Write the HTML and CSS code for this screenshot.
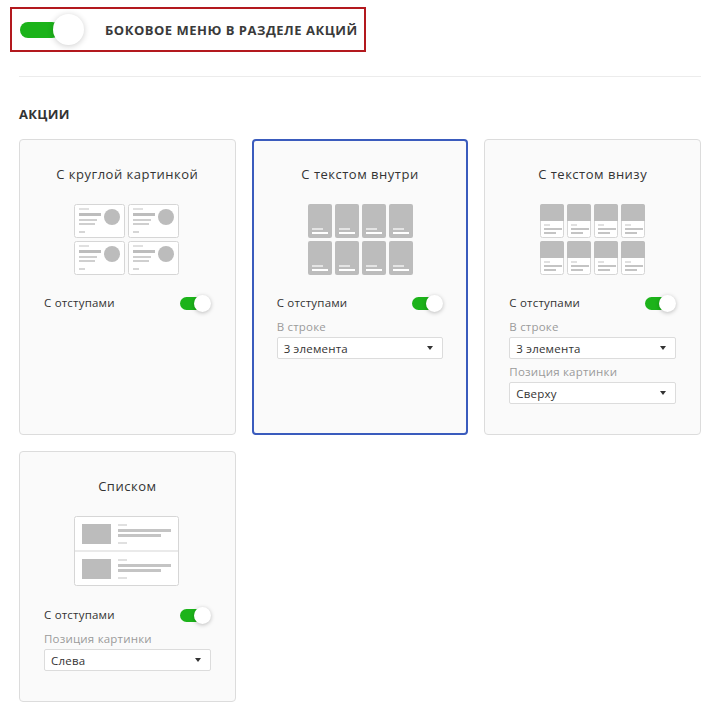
FILE: index.html
```html
<!DOCTYPE html>
<html lang="ru">
<head>
    <meta charset="UTF-8">
    <meta name="viewport" content="width=device-width, initial-scale=1.0">
    <title>Настройки акций</title>
    <link rel="stylesheet" href="styles.css">
</head>
<body>

    <div class="settings">
        <!-- Side menu option -->
        <div class="side-option">
            <span class="switch switch-big on"><span class="knob"></span></span>
            <span class="side-option-text">Боковое меню в разделе акций</span>
        </div>

        <hr class="divider">

        <h3 class="section-title">Акции</h3>

        <div class="views">
            <!-- Round picture -->
            <div class="view">
                <div class="view-title">С круглой картинкой</div>
                <svg class="thumb" width="106" height="71" viewBox="0 0 106 71">
                    <defs>
                        <g id="tile-round">
                            <rect x="0.5" y="0.5" width="50" height="33" rx="2" fill="#fff" stroke="#d6d6d6"/>
                            <rect x="5" y="4" width="10" height="2" fill="#e0e0e0"/>
                            <rect x="5" y="9" width="22" height="3" fill="#bdbdbd"/>
                            <rect x="5" y="15" width="18" height="2" fill="#cfcfcf"/>
                            <rect x="5" y="19" width="16" height="2" fill="#cfcfcf"/>
                            <rect x="5" y="27" width="6" height="2" fill="#d6d6d6"/>
                            <circle cx="38" cy="13" r="8" fill="#bcbcbc"/>
                        </g>
                    </defs>
                    <use href="#tile-round" x="0" y="0"/>
                    <use href="#tile-round" x="54" y="0"/>
                    <use href="#tile-round" x="0" y="37"/>
                    <use href="#tile-round" x="54" y="37"/>
                </svg>
                <div class="option-row">
                    <span>С отступами</span>
                    <span class="switch on"><span class="knob"></span></span>
                </div>
            </div>

            <!-- Text inside -->
            <div class="view active">
                <div class="view-title">С текстом внутри</div>
                <svg class="thumb" width="106" height="71" viewBox="0 0 106 71">
                    <defs>
                        <g id="tile-inside">
                            <rect x="0" y="0" width="24" height="34" rx="2" fill="#bcbcbc"/>
                            <rect x="4" y="24" width="11" height="2" fill="#e4e4e4"/>
                            <rect x="4" y="28" width="16" height="2" fill="#fff"/>
                        </g>
                    </defs>
                    <use href="#tile-inside" x="1" y="0"/>
                    <use href="#tile-inside" x="28" y="0"/>
                    <use href="#tile-inside" x="55" y="0"/>
                    <use href="#tile-inside" x="82" y="0"/>
                    <use href="#tile-inside" x="1" y="37"/>
                    <use href="#tile-inside" x="28" y="37"/>
                    <use href="#tile-inside" x="55" y="37"/>
                    <use href="#tile-inside" x="82" y="37"/>
                </svg>
                <div class="option-row">
                    <span>С отступами</span>
                    <span class="switch on"><span class="knob"></span></span>
                </div>
                <div class="field-label">В строке</div>
                <div class="select">3 элемента<span class="arrow"></span></div>
            </div>

            <!-- Text below -->
            <div class="view">
                <div class="view-title">С текстом внизу</div>
                <svg class="thumb" width="106" height="71" viewBox="0 0 106 71">
                    <defs>
                        <g id="tile-below">
                            <rect x="0.5" y="0.5" width="23" height="33" rx="2" fill="#fff" stroke="#d6d6d6"/>
                            <path d="M0 2 a2 2 0 0 1 2 -2 h20 a2 2 0 0 1 2 2 v15 h-24 z" fill="#bcbcbc"/>
                            <rect x="4" y="20" width="6" height="2" fill="#e0e0e0"/>
                            <rect x="4" y="24" width="18" height="2" fill="#c4c4c4"/>
                            <rect x="4" y="28" width="12" height="2" fill="#c4c4c4"/>
                        </g>
                    </defs>
                    <use href="#tile-below" x="0" y="0"/>
                    <use href="#tile-below" x="27" y="0"/>
                    <use href="#tile-below" x="54" y="0"/>
                    <use href="#tile-below" x="81" y="0"/>
                    <use href="#tile-below" x="0" y="37"/>
                    <use href="#tile-below" x="27" y="37"/>
                    <use href="#tile-below" x="54" y="37"/>
                    <use href="#tile-below" x="81" y="37"/>
                </svg>
                <div class="option-row">
                    <span>С отступами</span>
                    <span class="switch on"><span class="knob"></span></span>
                </div>
                <div class="field-label">В строке</div>
                <div class="select">3 элемента<span class="arrow"></span></div>
                <div class="field-label">Позиция картинки</div>
                <div class="select">Сверху<span class="arrow"></span></div>
            </div>

            <!-- List -->
            <div class="view">
                <div class="view-title">Списком</div>
                <svg class="thumb" width="106" height="71" viewBox="0 0 106 71">
                    <defs>
                        <g id="list-row">
                            <rect x="8" y="8" width="29" height="20" fill="#bcbcbc"/>
                            <rect x="44" y="8" width="9" height="2" fill="#e0e0e0"/>
                            <rect x="44" y="13" width="53" height="3" fill="#c4c4c4"/>
                            <rect x="44" y="18" width="43" height="3" fill="#c4c4c4"/>
                            <rect x="44" y="26" width="9" height="2" fill="#e0e0e0"/>
                        </g>
                    </defs>
                    <rect x="0.5" y="0.5" width="104" height="69" rx="2" fill="#fff" stroke="#d6d6d6"/>
                    <rect x="0" y="34.5" width="105" height="1" fill="#d6d6d6"/>
                    <use href="#list-row" x="0" y="0"/>
                    <use href="#list-row" x="0" y="35"/>
                </svg>
                <div class="option-row">
                    <span>С отступами</span>
                    <span class="switch on"><span class="knob"></span></span>
                </div>
                <div class="field-label">Позиция картинки</div>
                <div class="select">Слева<span class="arrow"></span></div>
            </div>
        </div>
    </div>

</body>
</html>
```

FILE: styles.css
```css
/* Page */
body {
    margin: 0;
    background: #fff;
    font-family: "Open Sans", Arial, sans-serif;
    color: #333;
}

.settings {
    width: 682px;
    padding: 7px 0 0 19px;
}

/* Side menu toggle block */
.side-option {
    display: flex;
    align-items: center;
    margin-left: -9px;
    padding: 0 8px;
    height: 41px;
    width: 336px;
    border: 2px solid #b3191e;
}

.side-option-text {
    margin-left: 45px;
    font-size: 13px;
    font-weight: 700;
    letter-spacing: 0.5px;
    text-transform: uppercase;
    white-space: nowrap;
    color: #3a3a3a;
}

.divider {
    border: none;
    border-top: 1px solid #ececec;
    margin: 24px 0 0 0;
}

.section-title {
    margin: 29px 0 0 0;
    font-size: 13px;
    line-height: 16px;
    font-weight: 700;
    letter-spacing: 0.3px;
    text-transform: uppercase;
}

/* Toggle switch */
.switch {
    position: relative;
    display: inline-block;
    flex-shrink: 0;
    width: 25px;
    height: 13px;
    border-radius: 7px;
    background: #ccc;
}

.switch.on {
    background: #1cb31a;
}

.switch .knob {
    position: absolute;
    top: -2px;
    right: -6px;
    width: 17px;
    height: 17px;
    border-radius: 50%;
    background: #fff;
    box-shadow: 0 1px 4px rgba(0, 0, 0, 0.25);
}

.switch-big {
    width: 40px;
    height: 16px;
    border-radius: 8px;
}

.switch-big .knob {
    top: -8px;
    right: -24px;
    width: 31px;
    height: 31px;
    box-shadow: 0 1px 6px rgba(0, 0, 0, 0.2);
}

/* View cards */
.views {
    display: grid;
    grid-template-columns: repeat(3, 1fr);
    gap: 16px;
    margin-top: 17px;
}

.view {
    display: flex;
    flex-direction: column;
    padding: 25px 24px 30px 24px;
    background: #fafafa;
    border: 1px solid #dcdcdc;
    border-radius: 4px;
}

.view.active {
    padding: 24px 23px 29px 23px;
    border: 2px solid #3a5bbd;
}

.view-title {
    text-align: center;
    font-size: 13px;
    line-height: 18px;
    letter-spacing: 0.5px;
}

.thumb {
    display: block;
    margin: 21px auto 0 auto;
}

.option-row {
    display: flex;
    justify-content: space-between;
    align-items: center;
    margin-top: 20px;
    padding-right: 6px;
    font-size: 11.5px;
    line-height: 16px;
    letter-spacing: 0.2px;
}

.field-label {
    margin-top: 8px;
    font-size: 11.5px;
    line-height: 16px;
    letter-spacing: 0.2px;
    color: #9a9a9a;
}

.select + .field-label {
    margin-top: 5px;
}

.select {
    display: flex;
    justify-content: space-between;
    align-items: center;
    margin-top: 2px;
    height: 20px;
    padding: 0 9px 0 6px;
    background: #fff;
    border: 1px solid #dcdcdc;
    border-radius: 2px;
    font-size: 11.5px;
    letter-spacing: 0.2px;
    color: #333;
}

.select .arrow {
    width: 0;
    height: 0;
    border-left: 3px solid transparent;
    border-right: 3px solid transparent;
    border-top: 4px solid #333;
}
```
